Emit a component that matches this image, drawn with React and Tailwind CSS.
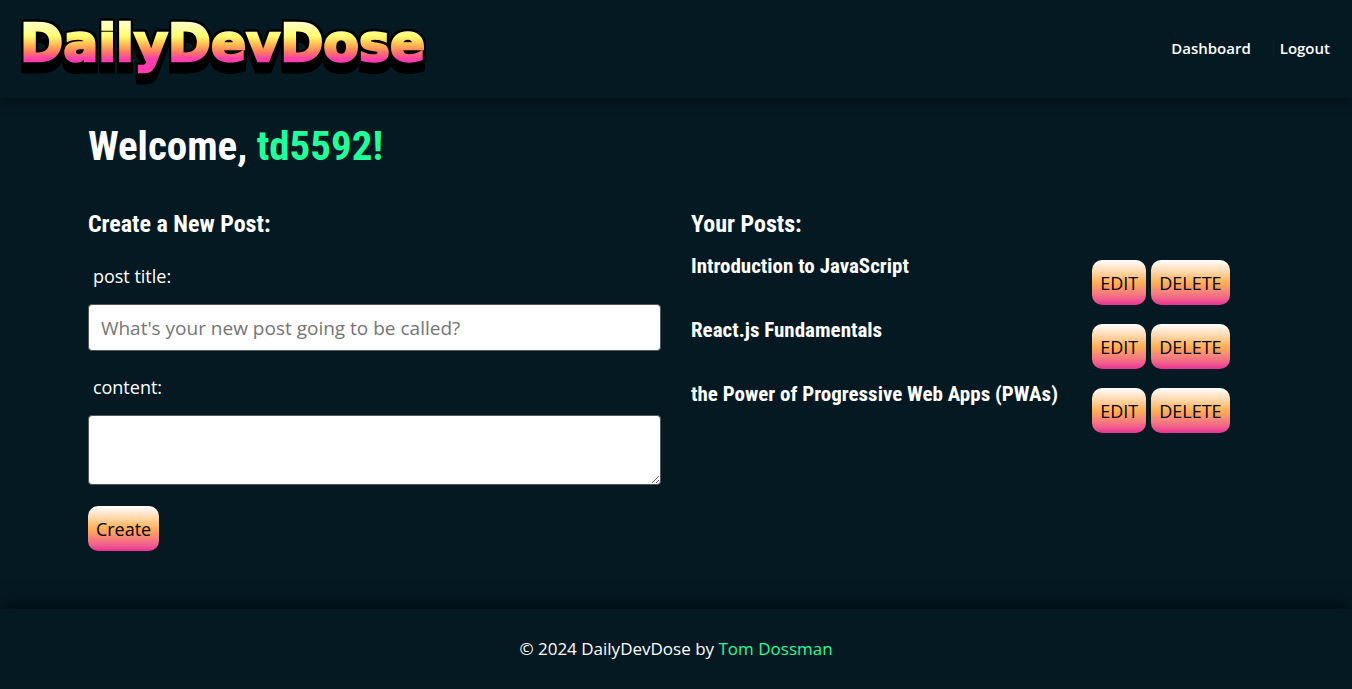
const posts = [
  'Introduction to JavaScript',
  'React.js Fundamentals',
  'the Power of Progressive Web Apps (PWAs)',
];

const display = "font-['Roboto_Condensed','Liberation_Sans_Narrow',sans-serif] font-bold";

function GradientButton({ children, ...props }) {
  return (
    <button
      className="h-[45px] rounded-[10px] bg-linear-to-b from-white via-[#ffb04f] to-[#e92e97] px-2 text-lg text-black"
      {...props}
    >
      {children}
    </button>
  );
}

function Logo() {
  return (
    <svg width="412" height="62" viewBox="0 0 412 62" className="overflow-visible">
      <defs>
        <linearGradient id="sunset" gradientUnits="userSpaceOnUse" x1="0" y1="6" x2="0" y2="46">
          <stop offset="0" stopColor="#ffffc0" />
          <stop offset="0.3" stopColor="#ffff70" />
          <stop offset="0.5" stopColor="#ffc050" />
          <stop offset="0.7" stopColor="#ff7a60" />
          <stop offset="0.88" stopColor="#ff3cac" />
        </linearGradient>
      </defs>
      <text
        x="-2"
        y="43"
        fill="url(#sunset)"
        stroke="url(#sunset)"
        strokeWidth="2.5"
        strokeLinejoin="miter"
        className="font-['DejaVu_Sans',sans-serif] text-[52px] font-bold [filter:drop-shadow(2px_0_0_#000)_drop-shadow(-2px_0_0_#000)_drop-shadow(0_-2px_0_#000)_drop-shadow(0_4px_0_#000)_drop-shadow(0_7px_0_#000)]"
      >
        DailyDevDose
      </text>
    </svg>
  );
}

function Header() {
  return (
    <header className="flex h-[98px] items-center justify-between px-[22px] shadow-[0_0_12px_rgba(0,0,0,0.7)]">
      <a href="#home">
        <Logo />
      </a>
      <nav className="flex gap-[22px] pb-0.5 font-semibold">
        <a href="#dashboard">Dashboard</a>
        <a href="#logout" className="flex items-center gap-[6px]">
          <span className="h-4 w-px bg-[#1f151b]" />
          Logout
        </a>
      </nav>
    </header>
  );
}

export default function App() {
  return (
    <div className="flex min-h-screen flex-col bg-[#051923] font-['Open_Sans','Noto_Sans',sans-serif] text-[15px] text-white">
      <Header />
      <main className="mx-auto w-[87%] flex-1 pt-5 pb-6">
        <h1 className={`${display} text-[41px] leading-[56px]`}>
          Welcome, <span className="text-[#1fff9a]">td5592!</span>
        </h1>
        <div className="mt-8 grid grid-cols-2 gap-[30px]">
          <section>
            <h2 className={`${display} text-2xl leading-9`}>Create a New Post:</h2>
            <form className="flex flex-col items-start text-lg" onSubmit={(e) => e.preventDefault()}>
              <label htmlFor="title" className="mt-5 px-[5px] leading-7">post title:</label>
              <input
                id="title"
                type="text"
                placeholder="What's your new post going to be called?"
                className="mt-[14px] h-[47px] w-full rounded-[4px] border border-[#555] bg-white px-3 text-[19px] text-black placeholder:text-[#757575]"
              />
              <label htmlFor="content" className="mt-[22px] px-[5px] leading-7">content:</label>
              <textarea
                id="content"
                className="mt-[14px] mb-[21px] h-[70px] w-full resize rounded-[4px] border border-[#555] bg-white px-3 py-2 text-[19px] text-black"
              />
              <GradientButton type="submit">Create</GradientButton>
            </form>
          </section>
          <section>
            <h2 className={`${display} text-2xl leading-9`}>Your Posts:</h2>
            <ul className="mt-[18px] flex flex-col gap-[19px]">
              {posts.map((title) => (
                <li key={title} className="grid grid-cols-[7fr_3fr]">
                  <h3 className={`${display} text-[21px] leading-3`}>{title}</h3>
                  <div className="flex gap-[5px]">
                    <GradientButton type="button">EDIT</GradientButton>
                    <GradientButton type="button">DELETE</GradientButton>
                  </div>
                </li>
              ))}
            </ul>
          </section>
        </div>
      </main>
      <footer className="flex h-20 items-center justify-center text-[17px] shadow-[0_0_20px_rgba(0,0,0,0.7)]">
        <p>
          © 2024 DailyDevDose by <a href="#author" className="text-[#1fff9a]">Tom Dossman</a>
        </p>
      </footer>
    </div>
  );
}
